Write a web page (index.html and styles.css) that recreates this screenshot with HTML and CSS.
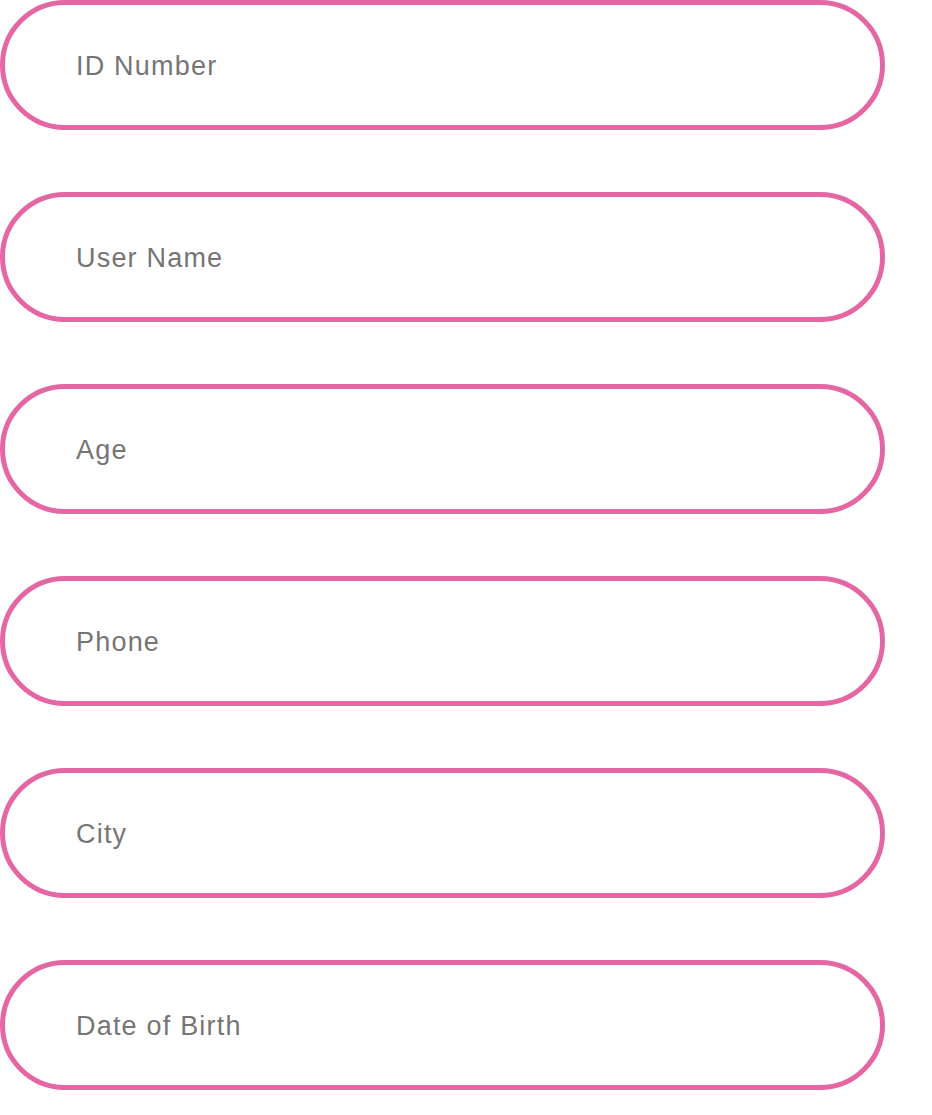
FILE: index.html
```html
<!DOCTYPE html>
<html lang="en">
<head>
<meta charset="utf-8">
<title>Form</title>
<link rel="stylesheet" href="styles.css">
</head>
<body>
<form class="form">
  <input class="field" type="text" placeholder="ID Number">
  <input class="field" type="text" placeholder="User Name">
  <input class="field" type="text" placeholder="Age">
  <input class="field" type="text" placeholder="Phone">
  <input class="field" type="text" placeholder="City">
  <input class="field" type="text" placeholder="Date of Birth">
</form>
</body>
</html>
```
FILE: styles.css
```css
html, body {
  margin: 0;
  padding: 0;
  background: #ffffff;
}
.form {
  display: flex;
  flex-direction: column;
  gap: 62px;
  padding: 0;
  margin: 0;
}
.field {
  box-sizing: border-box;
  width: 885px;
  height: 130px;
  margin: 0;
  border: 5px solid #e466a2;
  border-radius: 65px;
  padding: 2px 0 0 71px;
  background: #ffffff;
  font-family: "Liberation Sans", Arial, sans-serif;
  font-size: 27px;
  letter-spacing: 1.2px;
  color: #757575;
  outline: none;
}
.field::placeholder {
  color: #757575;
  opacity: 1;
}
```
